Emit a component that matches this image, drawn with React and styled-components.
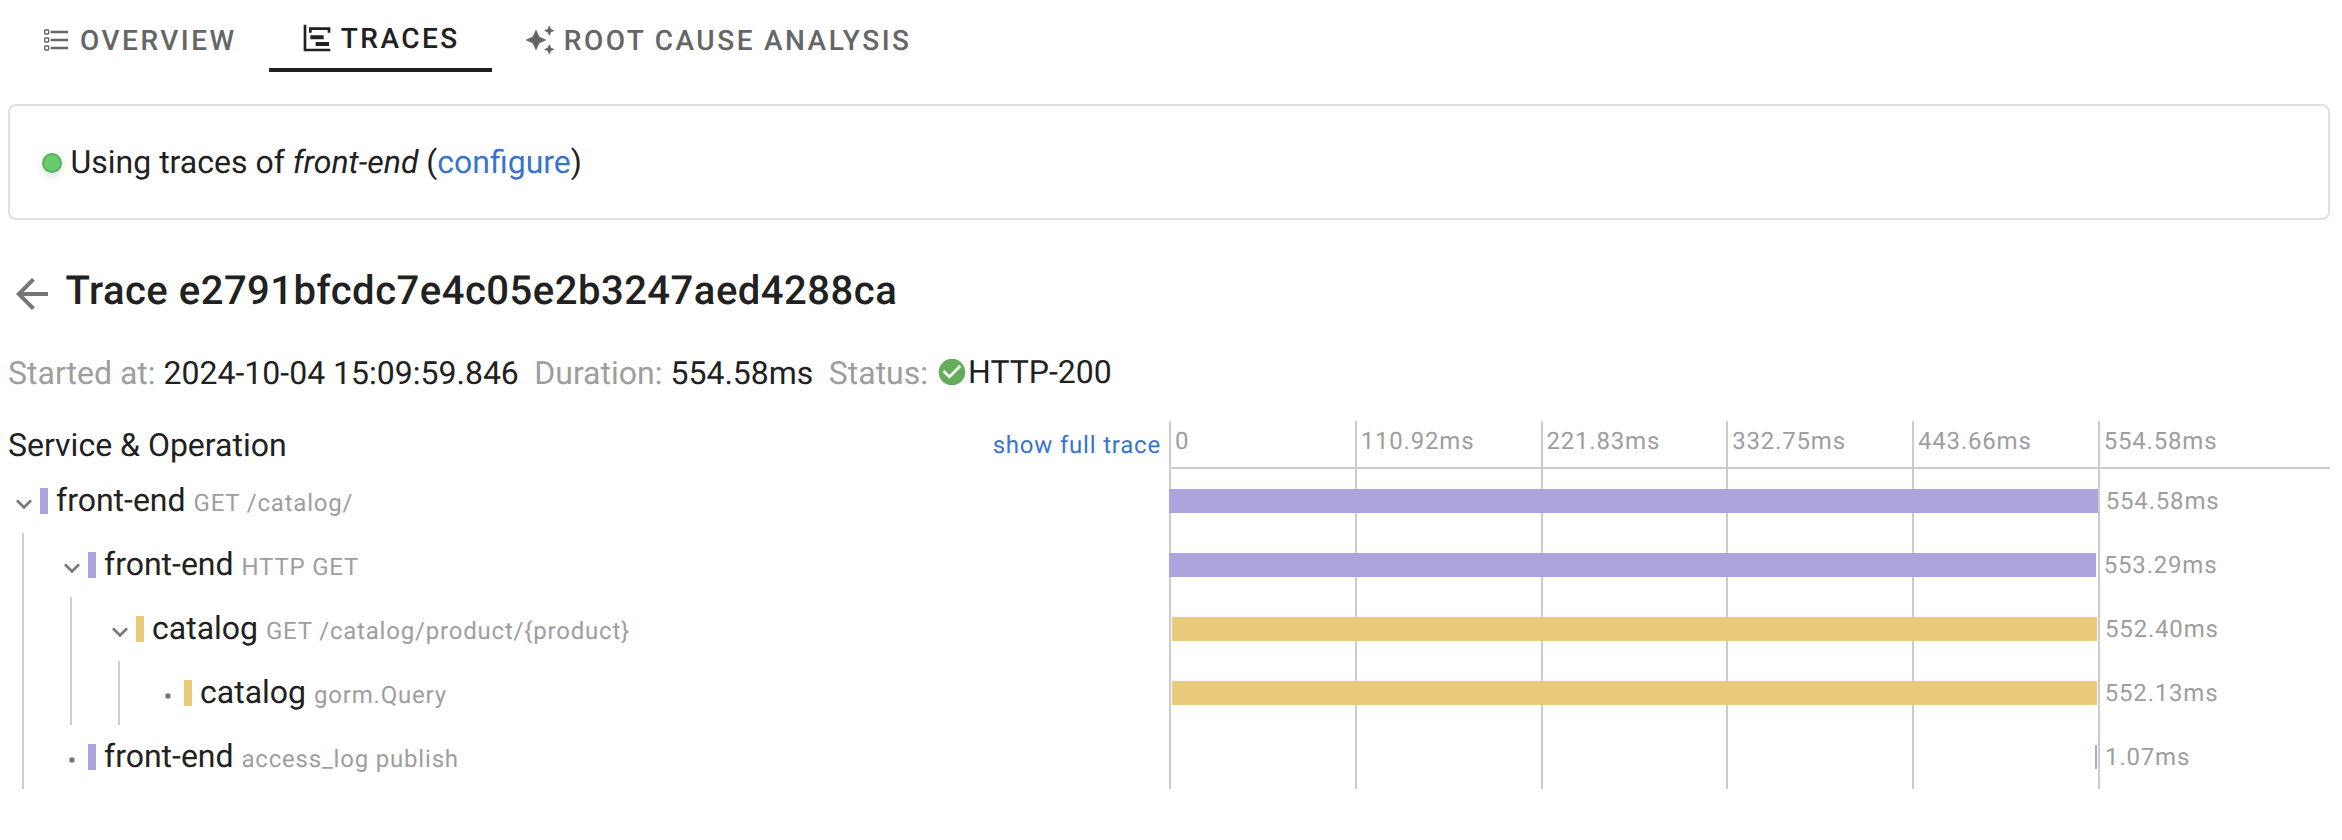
import React from "react";
import styled, { createGlobalStyle } from "styled-components";

const GlobalStyle = createGlobalStyle`
  * { box-sizing: border-box; }
  body {
    margin: 0;
    background: #fff;
    color: #212121;
    font-family: Roboto, sans-serif;
    font-size: 32px;
    line-height: 48px;
    text-rendering: geometricPrecision;
  }
`;

const ICONS = {
  list: "M21,19V17H8V19H21M21,13V11H8V13H21M8,7H21V5H8V7M4,5V7H6V5H4M3,5A1,1 0 0,1 4,4H6A1,1 0 0,1 7,5V7A1,1 0 0,1 6,8H4A1,1 0 0,1 3,7V5M4,11V13H6V11H4M3,11A1,1 0 0,1 4,10H6A1,1 0 0,1 7,11V13A1,1 0 0,1 6,14H4A1,1 0 0,1 3,13V11M4,17V19H6V17H4M3,17A1,1 0 0,1 4,16H6A1,1 0 0,1 7,17V19A1,1 0 0,1 6,20H4A1,1 0 0,1 3,19V17Z",
  timeline: "M2,2H4V20H22V22H2V2M7,10H17V13H7V10M11,15H21V18H11V15M6,4H22V8H20V6H8V8H6V4Z",
  sparkles: "M19,1L17.74,3.75L15,5L17.74,6.26L19,9L20.25,6.26L23,5L20.25,3.75M9,4L6.5,9.5L1,12L6.5,14.5L9,20L11.5,14.5L17,12L11.5,9.5M19,15L17.74,17.74L15,19L17.74,20.25L19,23L20.25,20.25L23,19L20.25,17.74",
  back: "M20,11V13H7.83L13.42,18.59L12,20L4,12L12,4L13.42,5.41L7.83,11H20Z",
  check: "M12 2C6.5 2 2 6.5 2 12S6.5 22 12 22 22 17.5 22 12 17.5 2 12 2M10 17L5 12L6.41 10.59L10 14.17L17.59 6.58L19 8L10 17Z",
  chevron: "M7.41,8.58L12,13.17L16.59,8.58L18,10L12,16L6,10L7.41,8.58Z",
  dot: "M12,10A2,2 0 0,0 10,12A2,2 0 0,0 12,14A2,2 0 0,0 14,12A2,2 0 0,0 12,10Z",
};

const Svg = styled.svg`
  display: block;
  flex: none;
  width: ${(p) => p.$size}px;
  height: ${(p) => p.$size}px;
  fill: ${(p) => p.$color || "currentColor"};
`;

const Icon = ({ name, size = 32, color, className }) => (
  <Svg className={className} viewBox="0 0 24 24" $size={size} $color={color}>
    <path d={ICONS[name]} />
  </Svg>
);

const Page = styled.main`
  width: 2342px;
  height: 840px;
  padding: 0 12px 0 8px;
`;

const Tabs = styled.nav`
  display: flex;
  height: 104px;
`;

const Tab = styled.a`
  display: flex;
  align-items: center;
  gap: 8px;
  height: ${(p) => (p.$active ? 72 : 80)}px;
  padding: ${(p) => (p.$active ? "8px 32px 0" : "0 32px")};
  border-bottom: ${(p) => (p.$active ? "4px solid #212121" : "none")};
  color: ${(p) => (p.$active ? "#212121" : "#666")};
  font-size: 28px;
  font-weight: 500;
  letter-spacing: 2.5px;
  word-spacing: -0.5px;
  white-space: nowrap;
`;

const TabLabel = styled.span`
  padding-top: 2px;
`;

const Notice = styled.section`
  display: flex;
  align-items: center;
  height: 116px;
  padding: 0 32px;
  border: 2px solid #e0e0e0;
  border-radius: 8px;
`;

const StatusDot = styled.span`
  width: 20px;
  height: 20px;
  margin: 2px 8.5px 0 0;
  border: 2px solid #58b15c;
  border-radius: 50%;
  background: #66cc6e;
  box-shadow: 0 4px 8px rgba(0, 0, 0, 0.12);
`;

const Link = styled.a`
  color: #3874cf;
`;

const Heading = styled.header`
  display: flex;
  align-items: center;
  height: 64px;
  margin-top: 39px;
`;

const BackIcon = styled(Icon)`
  margin: 6px 9.5px 0 0;
`;

const Title = styled.h1`
  margin: 0;
  font-size: 40px;
  font-weight: 500;
  letter-spacing: 0.5px;
`;

const Summary = styled.div`
  display: flex;
  height: 48px;
  margin-top: 26px;
  white-space: pre;
`;

const Fact = styled.div`
  display: flex;
  margin-right: 15.4px;
`;

const Label = styled.span`
  margin-right: 8px;
  color: #9e9e9e;
`;

const Status = styled.span`
  display: flex;
  align-items: center;
  height: 46px;
`;

const Table = styled.section`
  display: grid;
  grid-template-columns: 1161px 1161px;
  margin-top: 24px;
`;

const TreeHeader = styled.div`
  display: flex;
  align-items: center;
  justify-content: space-between;
  height: 48px;
  padding-right: 8px;
`;

const FullTraceLink = styled(Link)`
  font-size: 24px;
  letter-spacing: 0.8px;
`;

const SpanRow = styled.div`
  display: flex;
  align-items: center;
  height: 64px;
  white-space: nowrap;
`;

const Toggle = styled(Icon)`
  margin-top: 6px;
`;

const ServiceChip = styled.span`
  width: 8px;
  height: 26px;
  margin-right: 8px;
  background: ${(p) => p.$color};
`;

const Operation = styled.span`
  color: #9e9e9e;
  font-size: 24px;
  letter-spacing: 0.8px;
`;

const Children = styled.div`
  margin-left: 14px;
  padding-left: 32px;
  border-left: 2px solid #cfcfcf;
`;

const Chart = styled.div`
  display: grid;

  > * {
    grid-area: 1 / 1;
  }
`;

const Ticks = styled.div`
  display: flex;
`;

const Tick = styled.div`
  flex: 0 0 ${(p) => (p.$last ? 20 : 16)}%;
  padding: 0 0 0 4px;
  border-left: 2px solid #ccc;
  color: #9e9e9e;
  font-size: 24px;
  line-height: 40px;
  letter-spacing: 0.8px;
`;

const Bars = styled.div`
  padding-top: 46px;
`;

const Axis = styled.div`
  height: 2px;
  background: #ccc;
`;

const BarRow = styled.div`
  display: flex;
  align-items: center;
  height: 64px;
`;

const Bar = styled.div`
  flex: none;
  height: 24px;
  background: ${(p) => p.$color};
`;

const Duration = styled.span`
  margin-left: 8px;
  color: #9e9e9e;
  font-size: 24px;
  letter-spacing: 0.8px;
`;

const PURPLE = "#aca4dd";
const YELLOW = "#eaca7b";

const TRACE = {
  service: "front-end", operation: "GET /catalog/", color: PURPLE, offset: 0, duration: 554.58,
  children: [
    {
      service: "front-end", operation: "HTTP GET", color: PURPLE, offset: 0.1, duration: 553.29,
      children: [
        {
          service: "catalog", operation: "GET /catalog/product/{product}", color: YELLOW, offset: 1.75, duration: 552.4,
          children: [
            { service: "catalog", operation: "gorm.Query", color: YELLOW, offset: 1.85, duration: 552.13 },
          ],
        },
      ],
    },
    { service: "front-end", operation: "access_log publish", color: PURPLE, offset: 553.1, duration: 1.07 },
  ],
};

const TICKS = ["0", "110.92ms", "221.83ms", "332.75ms", "443.66ms", "554.58ms"];

const share = (ms) => `${(ms / TRACE.duration) * 80}%`;
const flatten = (span) => [span, ...(span.children || []).flatMap(flatten)];

const SpanNode = ({ span }) => (
  <div>
    <SpanRow>
      <Toggle name={span.children ? "chevron" : "dot"} color="#757575" />
      <ServiceChip $color={span.color} />
      <div>
        {span.service} <Operation>{span.operation}</Operation>
      </div>
    </SpanRow>
    {span.children && (
      <Children>
        {span.children.map((child) => (
          <SpanNode key={child.operation} span={child} />
        ))}
      </Children>
    )}
  </div>
);

export default function App() {
  return (
    <>
      <GlobalStyle />
      <Page>
        <Tabs>
          <Tab><Icon name="list" /><TabLabel>OVERVIEW</TabLabel></Tab>
          <Tab $active><Icon name="timeline" /><TabLabel>TRACES</TabLabel></Tab>
          <Tab><Icon name="sparkles" /><TabLabel>ROOT CAUSE ANALYSIS</TabLabel></Tab>
        </Tabs>

        <Notice>
          <StatusDot />
          <div>
            Using traces of <i>front-end</i> (<Link>configure</Link>)
          </div>
        </Notice>

        <Heading>
          <BackIcon name="back" size={48} color="#757575" />
          <Title>Trace e2791bfcdc7e4c05e2b3247aed4288ca</Title>
        </Heading>

        <Summary>
          <Fact><Label>Started at:</Label>2024-10-04 15:09:59.846</Fact>
          <Fact><Label>Duration:</Label>554.58ms</Fact>
          <Fact>
            <Label>Status:</Label>
            <Status><Icon name="check" color="#66ad5b" />HTTP-200</Status>
          </Fact>
        </Summary>

        <Table>
          <div>
            <TreeHeader>
              <span>Service &amp; Operation</span>
              <FullTraceLink>show full trace</FullTraceLink>
            </TreeHeader>
            <SpanNode span={TRACE} />
          </div>
          <Chart>
            <Ticks>
              {TICKS.map((tick, i) => (
                <Tick key={tick} $last={i === TICKS.length - 1}>{tick}</Tick>
              ))}
            </Ticks>
            <Bars>
              <Axis />
              {flatten(TRACE).map((span) => (
                <BarRow key={span.operation}>
                  <Bar $color={span.color} style={{ marginLeft: share(span.offset), width: share(span.duration) }} />
                  <Duration>{span.duration.toFixed(2)}ms</Duration>
                </BarRow>
              ))}
            </Bars>
          </Chart>
        </Table>
      </Page>
    </>
  );
}
